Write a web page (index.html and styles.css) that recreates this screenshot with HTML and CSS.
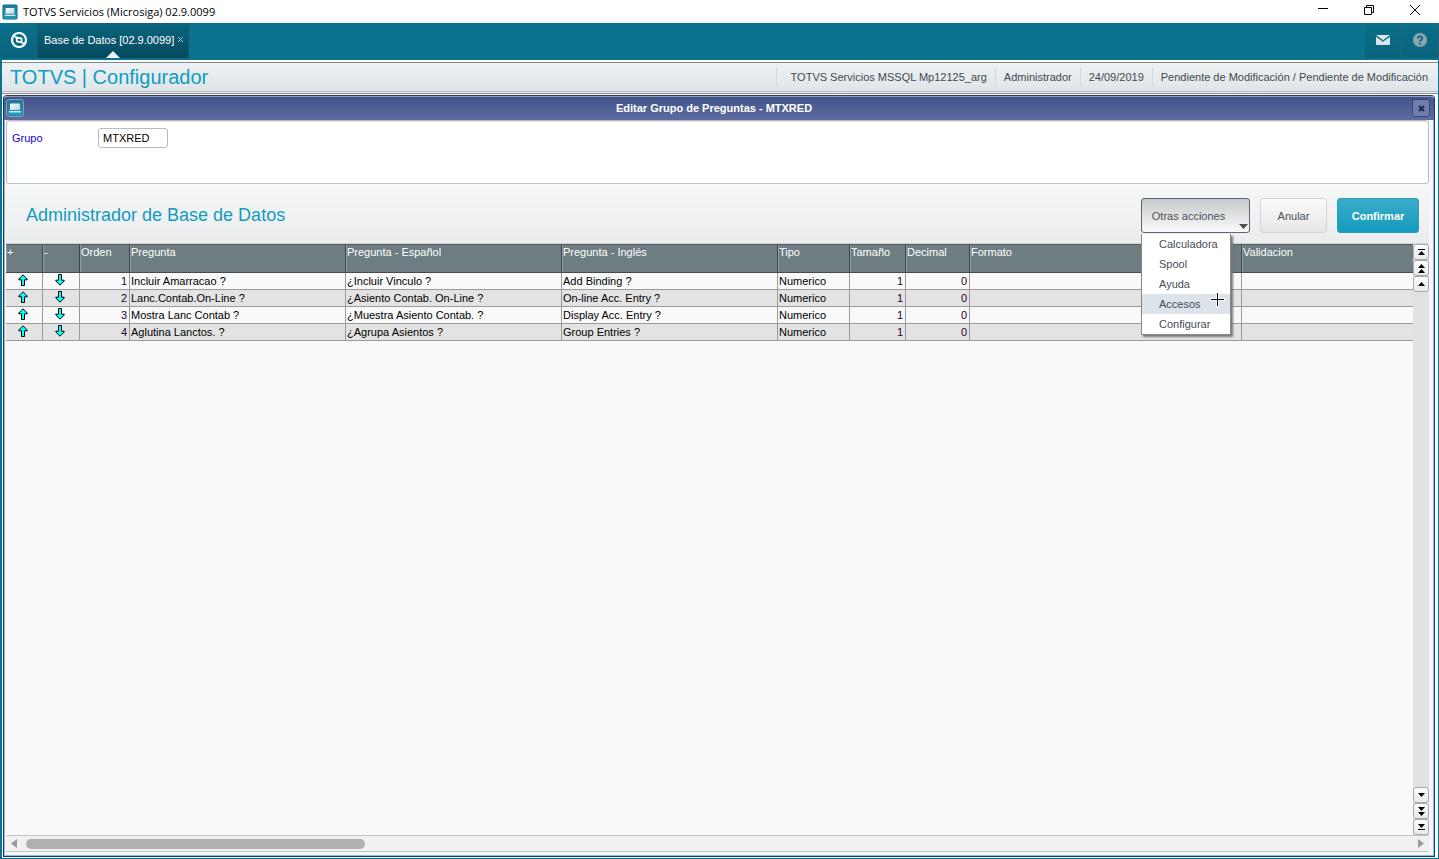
FILE: index.html
```html
<!DOCTYPE html>
<html lang="es">
<head>
<meta charset="utf-8">
<title>TOTVS Servicios (Microsiga) 02.9.0099</title>
<link rel="stylesheet" href="styles.css">
</head>
<body>
<svg class="defs" aria-hidden="true">
  <defs>
    <linearGradient id="tealTile" x1="0" y1="0" x2="0" y2="1"><stop offset="0" stop-color="#1c7896"/><stop offset="1" stop-color="#229dbb"/></linearGradient>
    <linearGradient id="screen" x1="0" y1="0" x2="1" y2="1"><stop offset="0" stop-color="#fff"/><stop offset="1" stop-color="#b4d3dd"/></linearGradient>
  </defs>
  <symbol id="app" viewBox="0 0 18 18">
    <rect x="1" y="1" width="16" height="16" rx="1" fill="url(#tealTile)" stroke="#1a7390"/>
    <rect x="4" y="4.500" width="10" height="6.500" rx="1" fill="url(#screen)"/>
    <path d="M3 12h12v1.500H3z" fill="#cfe6ed"/>
  </symbol>
  <symbol id="up" viewBox="0 0 10 12">
    <path d="M5 .8 9.200 5v.8H6.500v5.700h-3V5.800H.8V5z" fill="#0ff" stroke="#000"/>
  </symbol>
  <symbol id="down" viewBox="0 0 10 12">
    <path d="M5 11.200 9.200 7v-.8H6.500V.5h-3v5.700H.8V7z" fill="#0ff" stroke="#000"/>
  </symbol>
</svg>

<header class="titlebar">
  <svg class="titlebar-icon"><use href="#app"/></svg>
  <span class="titlebar-text">TOTVS Servicios (Microsiga) 02.9.0099</span>
  <div class="window-controls">
    <button aria-label="Minimizar"><svg width="12" height="12"><path d="M1 4.500h10" stroke="#000"/></svg></button>
    <button aria-label="Restaurar"><svg width="12" height="12"><path d="M1.500 3.500h7v7h-7zM3.500 3.500v-2h7v7h-2" fill="none" stroke="#000"/></svg></button>
    <button aria-label="Cerrar"><svg width="12" height="12"><path d="M1 1l10 10M11 1L1 11" stroke="#000"/></svg></button>
  </div>
</header>

<nav class="tabs">
  <button class="home" aria-label="Inicio">
    <svg width="16" height="16" viewBox="0 0 16 16"><circle cx="8" cy="8" r="7" fill="none" stroke="#f3f9fa" stroke-width="2.200"/><path d="M2 3.500 5.500 5.500 10.500 6.500 10.800 10.500 6 9.500 5.500 5.500M10.800 10.500 14 12.500" fill="none" stroke="#f3f9fa" stroke-width="1.800"/></svg>
  </button>
  <div class="tab">
    <a href="#base">Base de Datos [02.9.0099]</a>
    <button aria-label="Cerrar pestaña"><svg width="7" height="7"><path d="M1 1l5 5M6 1L1 6" stroke="#a9cbd4"/></svg></button>
  </div>
  <div class="tools">
    <button aria-label="Mensajes"><svg width="14" height="10"><rect width="14" height="10" rx="1" fill="#dbe6ea"/><path d="M0 .8 7 6 14 .8" fill="none" stroke="#0a6f8a" stroke-width="1.400"/></svg></button>
    <button aria-label="Ayuda"><svg width="14" height="14"><circle cx="7" cy="7" r="7" fill="#8ca5ae"/><path d="M4.800 5.500a2.200 2 0 1 1 3.300 1.600Q7 7.700 7 8.800" fill="none" stroke="#0a6680" stroke-width="1.700"/><circle cx="7" cy="11" r="1" fill="#0a6680"/></svg></button>
  </div>
</nav>

<main class="app">
  <header class="app-header">
    <h1>TOTVS | Configurador</h1>
    <ul>
      <li>TOTVS Servicios MSSQL Mp12125_arg</li>
      <li>Administrador</li>
      <li>24/09/2019</li>
      <li>Pendiente de Modificación / Pendiente de Modificación</li>
    </ul>
  </header>

  <section class="dialog">
    <header class="dialog-title">
      <svg class="dialog-icon"><use href="#app"/></svg>
      <h2>Editar Grupo de Preguntas - MTXRED</h2>
      <button aria-label="Cerrar"><svg width="7" height="7"><path d="M1 1l5 5M6 1L1 6" stroke="#222a49" stroke-width="2"/></svg></button>
    </header>
    <div class="dialog-body">
      <form class="group">
        <label for="grupo">Grupo</label>
        <input id="grupo" type="text" value="MTXRED">
      </form>

      <div class="actions">
        <h3>Administrador de Base de Datos</h3>
        <div class="more">
          <button class="btn btn-more" aria-expanded="true">Otras acciones
            <svg class="caret" width="9" height="5"><path d="M0 0h9L4.500 5z" fill="#45515a"/></svg>
          </button>
          <div class="menu">
            <button>Calculadora</button>
            <button>Spool</button>
            <button>Ayuda</button>
            <button class="hover">Accesos
              <svg class="pointer" width="15" height="15"><path d="M7.500 0v15M0 7.500h15" stroke="#fff" stroke-width="3"/><path d="M7.500 1v13M1 7.500h13" stroke="#000"/></svg>
            </button>
            <button>Configurar</button>
          </div>
        </div>
        <button class="btn">Anular</button>
        <button class="btn btn-primary">Confirmar</button>
      </div>

      <div class="grid">
        <div class="grid-main">
          <table>
            <colgroup><col class="c-arrow"><col class="c-arrow"><col class="c-order"><col class="c-text"><col class="c-text"><col class="c-text"><col class="c-type"><col class="c-size"><col class="c-dec"><col class="c-format"><col></colgroup>
            <thead><tr><th>+</th><th>-</th><th>Orden</th><th>Pregunta</th><th>Pregunta - Español</th><th>Pregunta - Inglés</th><th>Tipo</th><th>Tamaño</th><th>Decimal</th><th>Formato</th><th>Validacion</th></tr></thead>
            <tbody>
              <tr><td class="mid"><svg><use href="#up"/></svg></td><td class="mid"><svg><use href="#down"/></svg></td><td class="num">1</td><td>Incluir Amarracao ?</td><td>¿Incluir Vinculo ?</td><td>Add Binding ?</td><td>Numerico</td><td class="num">1</td><td class="num">0</td><td></td><td></td></tr>
              <tr><td class="mid"><svg><use href="#up"/></svg></td><td class="mid"><svg><use href="#down"/></svg></td><td class="num">2</td><td>Lanc.Contab.On-Line ?</td><td>¿Asiento Contab. On-Line ?</td><td>On-line Acc. Entry ?</td><td>Numerico</td><td class="num">1</td><td class="num">0</td><td></td><td></td></tr>
              <tr><td class="mid"><svg><use href="#up"/></svg></td><td class="mid"><svg><use href="#down"/></svg></td><td class="num">3</td><td>Mostra Lanc Contab ?</td><td>¿Muestra Asiento Contab. ?</td><td>Display Acc. Entry ?</td><td>Numerico</td><td class="num">1</td><td class="num">0</td><td></td><td></td></tr>
              <tr><td class="mid"><svg><use href="#up"/></svg></td><td class="mid"><svg><use href="#down"/></svg></td><td class="num">4</td><td>Aglutina Lanctos. ?</td><td>¿Agrupa Asientos ?</td><td>Group Entries ?</td><td>Numerico</td><td class="num">1</td><td class="num">0</td><td></td><td></td></tr>
            </tbody>
          </table>
        </div>
        <div class="vscroll">
          <button aria-label="Primero"><svg width="7" height="6"><path d="M0 .5h7" stroke="#000"/><path d="M0 6h7L3.500 2z"/></svg></button>
          <button aria-label="Página anterior"><svg width="7" height="9"><path d="M0 4h7L3.500 0zM0 9h7L3.500 5z"/></svg></button>
          <button aria-label="Anterior"><svg width="7" height="4"><path d="M0 4h7L3.500 0z"/></svg></button>
          <span class="spacer"></span>
          <button aria-label="Siguiente"><svg width="7" height="4"><path d="M0 0h7L3.500 4z"/></svg></button>
          <button aria-label="Página siguiente"><svg width="7" height="9"><path d="M0 0h7L3.500 4zM0 5h7L3.500 9z"/></svg></button>
          <button aria-label="Último"><svg width="7" height="6"><path d="M0 5.500h7" stroke="#000"/><path d="M0 0h7L3.500 4z"/></svg></button>
        </div>
      </div>
      <div class="hscroll">
        <button aria-label="Izquierda"><svg width="6" height="9"><path d="M6 0v9L0 4.500z" fill="#9a9a9a"/></svg></button>
        <div class="track"><div class="thumb"></div></div>
        <button aria-label="Derecha"><svg width="6" height="9"><path d="M0 0v9l6-4.500z" fill="#9a9a9a"/></svg></button>
      </div>
    </div>
  </section>
</main>
</body>
</html>
```

FILE: styles.css
```css
* { box-sizing: border-box; }

body {
  margin: 0;
  height: 100vh;
  display: flex;
  flex-direction: column;
  background: #0b718d;
  font: 11px/14px "Liberation Sans", Arial, sans-serif;
  color: #000;
  overflow: hidden;
}

button {
  display: flex;
  align-items: center;
  justify-content: center;
  border: 0;
  padding: 0;
  background: none;
  font: inherit;
  color: inherit;
}

h1, h2, h3, ul { margin: 0; padding: 0; font-weight: normal; }
.defs { position: absolute; width: 0; height: 0; }

/* Window frame */
.titlebar {
  flex: none;
  height: 23px;
  display: flex;
  align-items: center;
  background: #fff;
  padding-left: 2px;
}
.titlebar-icon { width: 16px; height: 16px; }
.titlebar-text { margin-left: 5px; font: 11px/16px "Open Sans", "Noto Sans", sans-serif; }
.window-controls { margin-left: auto; padding: 0 1px 3px 0; display: flex; }
.window-controls button { width: 46px; height: 20px; }

.tabs { flex: none; height: 37px; display: flex; padding-bottom: 2px; }
.home { width: 38px; padding-bottom: 2px; background: linear-gradient(#0b718d, #09637c); border-right: 1px solid #145873; }
.tab {
  position: relative;
  display: flex;
  align-items: center;
  gap: 3px;
  padding: 0 4px 2px 6px;
  border-right: 1px solid #145873;
  background: linear-gradient(#09667f, #06495d);
}
.tab::after {
  content: "";
  position: absolute;
  left: 50%;
  bottom: 0;
  margin-left: -7px;
  border: 7px solid transparent;
  border-top: 0;
  border-bottom-color: #eef3f5;
}
.tab a { color: #fff; text-decoration: none; }
.tools { margin-left: auto; display: flex; }
.tools button { width: 37px; padding-bottom: 2px; border-right: 1px solid #2c5f78; background: linear-gradient(#0a6f8a, #09647c); }

.app {
  flex: 1;
  min-height: 0;
  display: flex;
  flex-direction: column;
  margin: 0 1px 1px 2px;
  padding: 2px 0 1px;
  background: #fff;
}
.app-header {
  flex: none;
  height: 30px;
  display: flex;
  align-items: center;
  justify-content: space-between;
  padding: 0 0 0 8px;
  border-top: 1px solid #858788;
  border-bottom: 1px solid #b5babd;
  background: linear-gradient(#eef2f5, #dfe4e9);
  box-shadow: 0 1px 0 #f4f4f4, 0 2px 0 #858788;
}
.app-header h1 { font-size: 20px; line-height: 24px; color: #109cc0; }
.app-header ul { display: flex; list-style: none; color: #45494d; }
.app-header li { padding: 2px 8px; border-left: 1px solid #d3d9dc; }
.app-header li:first-child { padding-left: 14px; }
.app-header li:last-child { padding-right: 10px; }

/* Dialog */
.dialog {
  flex: 1;
  min-height: 0;
  display: flex;
  flex-direction: column;
  margin: 3px 3px 0 1px;
  border: 1px solid #0b4178;
  border-top-color: #303a54;
  border-radius: 4px 4px 0 0;
  background: #f6f7f7;
}
.dialog-title {
  flex: none;
  height: 24px;
  display: flex;
  align-items: center;
  justify-content: space-between;
  padding: 0 4px 1px 2px;
  border-top: 1px solid #8c9dc3;
  background: linear-gradient(#41558b, #5e6ca0);
  border-radius: 3px 3px 0 0;
}
.dialog-icon { width: 18px; height: 18px; outline: 1px solid #8f9cc0; outline-offset: -1px; border-radius: 3px; }
.dialog-title h2 { padding-right: 8px; font-size: 11px; line-height: 14px; font-weight: bold; color: #fff; }
.dialog-title button { width: 18px; height: 18px; border: 1px solid #35477a; border-radius: 3px; background: #6f7dac; }
.dialog-body {
  flex: 1;
  min-height: 0;
  display: flex;
  flex-direction: column;
  padding: 0 4px 3px 1px;
  border: 1px solid #8fb9dd;
  border-top: 0;
}
.group {
  flex: none;
  height: 64px;
  display: flex;
  align-items: flex-start;
  padding: 7px 5px;
  border: 1px solid #bcbebe;
  border-radius: 3px;
  box-shadow: inset 0 1px 0 #dedede;
  background: #fff;
}
.group label { width: 86px; line-height: 20px; color: #1400d8; }
.group input {
  width: 70px;
  height: 20px;
  padding: 0 4px;
  border: 1px solid #b9bcbe;
  border-radius: 3px;
  font: inherit;
}

.actions {
  flex: none;
  height: 60px;
  display: flex;
  align-items: center;
  gap: 10px;
  padding: 3px 10px 0 20px;
  background: linear-gradient(#f6f8f7, #ebecee);
  border-bottom: 1px solid #d0d2d3;
}
.actions h3 { flex: 1; font-size: 18px; line-height: 22px; color: #109cc0; }
.btn {
  width: 67px;
  height: 35px;
  padding-top: 2px;
  border: 1px solid #d2d4d5;
  border-radius: 3px;
  background: linear-gradient(#fafafa, #e6e7e8);
  color: #4b5056;
}
.btn-more {
  position: relative;
  width: 109px;
  padding-right: 14px;
  border-color: #5b6574;
  background: linear-gradient(#c5c9ca, #fbfbfb);
}
.caret { position: absolute; right: 1px; bottom: 3px; }
.btn-primary { width: 82px; border-color: #25a0c0; background: linear-gradient(#3bacc9, #149abd); color: #fff; font-weight: bold; }
.more { position: relative; }
.menu {
  position: absolute;
  z-index: 2;
  top: 36px;
  left: 0;
  width: 90px;
  border: 1px solid #84888b;
  border-top: 0;
  background: #fff;
  box-shadow: 2px 2px 2px #777;
}
.menu button { position: relative; width: 100%; height: 20px; padding-left: 17px; justify-content: flex-start; color: #454d57; }
.menu .hover { background: #dce3ea; }
.pointer { position: absolute; left: 68px; top: -2px; }

/* Question grid */
.grid { flex: 1; min-height: 0; display: flex; background: #f9f9f9; }
.grid-main { flex: 1; min-width: 0; overflow: hidden; }
table { width: 100%; table-layout: fixed; border-collapse: separate; border-spacing: 0; }
.c-arrow { width: 37px; }
.c-order { width: 50px; }
.c-text { width: 216px; }
.c-type { width: 72px; }
.c-size { width: 56px; }
.c-dec { width: 64px; }
.c-format { width: 272px; }
th {
  height: 29px;
  padding: 0 1px;
  text-align: left;
  vertical-align: top;
  font-weight: normal;
  color: #fff;
  background: #6e7d81;
  border-top: 1px solid #555f62;
  border-right: 1px solid #3f474a;
  border-bottom: 1px solid #444c4f;
  box-shadow: inset 1px 0 0 #929da0;
}
td { height: 17px; padding: 1px 1px 0; line-height: 15px; border-right: 1px solid #9b9b9b; border-bottom: 1px solid #9b9b9b; white-space: nowrap; }
th:last-child, td:last-child { border-right: 0; }
tbody tr:nth-child(even) { background: #e3e3e3; }
.num { padding-right: 2px; text-align: right; color: #26002e; }
.mid { padding: 0 2px 2px 0; text-align: center; }
.mid svg { display: block; width: 10px; height: 12px; margin: 0 auto; }

.vscroll { width: 16px; display: flex; flex-direction: column; background: #e2e2e2; }
.vscroll button { flex: none; height: 16px; border: 1px solid #aaa; border-radius: 3px; background: linear-gradient(#fdfdfd, #e9e9e9); }
.spacer { flex: 1; }
.hscroll {
  flex: none;
  height: 17px;
  display: flex;
  align-items: center;
  border-top: 1px solid #c4c4c4;
  border-bottom: 1px solid #c4c4c4;
  background: #f1f1f1;
}
.hscroll button { width: 16px; }
.track { flex: 1; padding: 0 4px; }
.thumb { width: 24.5%; height: 10px; border-radius: 5px; background: #b0b0b0; }
```
